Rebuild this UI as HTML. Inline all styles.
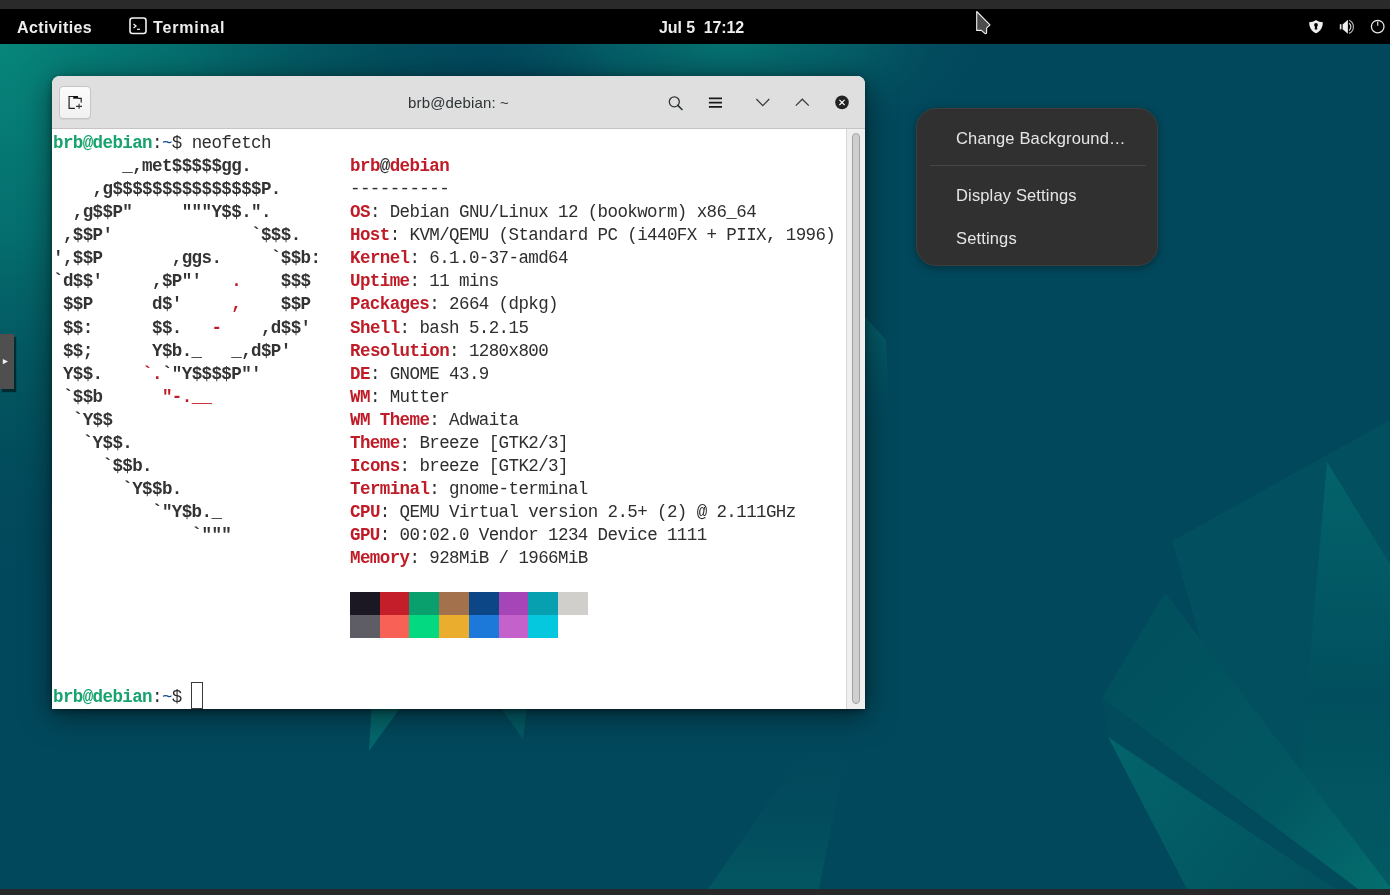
<!DOCTYPE html>
<html><head><meta charset="utf-8">
<style>
*{margin:0;padding:0;box-sizing:border-box}
html,body{width:1390px;height:895px;overflow:hidden;background:#02485c}
body{position:relative;font-family:"Liberation Sans",sans-serif}
.abs{position:absolute}
#bg{position:absolute;left:0;top:0;width:1390px;height:895px}
#stripT{position:absolute;left:0;top:0;width:1390px;height:9px;background:#2a2a2a}
#stripB{position:absolute;left:0;top:889px;width:1390px;height:6px;background:#282828}
#bar{position:absolute;left:0;top:9px;width:1390px;height:35px;background:#000}
.bt{position:absolute;will-change:transform;color:#ededed;font-weight:bold;font-size:16px;line-height:20px;white-space:pre}
#win{position:absolute;left:52px;top:76px;width:813px;height:633px;background:#fff;border-radius:8px 8px 0 0;box-shadow:0 2px 6px rgba(0,0,0,.4),0 6px 30px rgba(0,0,0,.5);overflow:hidden}
#hdr{position:absolute;left:0;top:0;width:813px;height:53px;background:#dfdfe0;border-bottom:1px solid #c4c4c6}
#term{position:absolute;left:0;top:53px;width:794px;height:580px;background:#fff;overflow:hidden}
#sb{position:absolute;left:794px;top:53px;width:19px;height:580px;background:#efeff0;border-left:1px solid #d6d6d6}
#slider{position:absolute;left:5px;top:4px;width:8px;height:571px;background:#cfcfd1;border:1px solid #a3a3a3;border-radius:5px}
pre{position:absolute;left:1px;margin:0;will-change:transform;font-family:"Liberation Mono",monospace;font-size:17.5px;letter-spacing:-0.6px;line-height:23.07px;color:#2e2e2e;white-space:pre}
b{font-weight:bold}
.r{color:#c01c28;font-weight:bold}
.g{color:#18a36e;font-weight:bold}
.bl{color:#12488b}
.a{font-weight:bold;color:#333}
#menu{position:absolute;left:916px;top:108px;width:242px;height:158px;background:#303030;border-radius:20px;border:1px solid #3e3e3e;box-shadow:0 2px 8px rgba(0,0,0,.35)}
.mi{position:absolute;will-change:transform;left:39px;color:#e6e6e6;font-size:16.5px;letter-spacing:0.15px;white-space:pre;line-height:20px}
</style></head><body>
<svg id="bg" width="1390" height="895" viewBox="0 0 1390 895">
<defs>
<radialGradient id="tl" cx="0" cy="44" r="520" gradientUnits="userSpaceOnUse" gradientTransform="translate(0 44) scale(1 1.05) translate(0 -44)">
<stop offset="0" stop-color="#07867b"/>
<stop offset="0.35" stop-color="#057270" stop-opacity="0.9"/>
<stop offset="0.7" stop-color="#03585f" stop-opacity="0.5"/>
<stop offset="1" stop-color="#02485c" stop-opacity="0"/>
</radialGradient>
<radialGradient id="tm" cx="730" cy="40" r="260" gradientUnits="userSpaceOnUse" gradientTransform="translate(730 40) scale(1 0.45) translate(-730 -40)">
<stop offset="0" stop-color="#067370"/>
<stop offset="0.5" stop-color="#05646a" stop-opacity="0.7"/>
<stop offset="1" stop-color="#02485c" stop-opacity="0"/>
</radialGradient>
<linearGradient id="pa" x1="1172" y1="540" x2="1390" y2="889" gradientUnits="userSpaceOnUse">
<stop offset="0" stop-color="#025360"/>
<stop offset="1" stop-color="#035a64"/>
</linearGradient>
<linearGradient id="pb" x1="1327" y1="462" x2="1320" y2="889" gradientUnits="userSpaceOnUse">
<stop offset="0" stop-color="#03636b"/>
<stop offset="0.55" stop-color="#014f5e"/>
<stop offset="1" stop-color="#025a63"/>
</linearGradient>
<linearGradient id="pc" x1="1150" y1="650" x2="1390" y2="889" gradientUnits="userSpaceOnUse">
<stop offset="0" stop-color="#01505e"/>
<stop offset="0.6" stop-color="#025862"/>
<stop offset="1" stop-color="#046e6e"/>
</linearGradient>
<linearGradient id="pd" x1="1108" y1="737" x2="1300" y2="889" gradientUnits="userSpaceOnUse">
<stop offset="0" stop-color="#03646b"/>
<stop offset="1" stop-color="#02535f"/>
</linearGradient>
<linearGradient id="qd" x1="0" y1="738" x2="0" y2="889" gradientUnits="userSpaceOnUse">
<stop offset="0" stop-color="#02485c" stop-opacity="0"/>
<stop offset="1" stop-color="#035862" stop-opacity="0.9"/>
</linearGradient>
<linearGradient id="rw" x1="0" y1="317" x2="0" y2="440" gradientUnits="userSpaceOnUse">
<stop offset="0" stop-color="#04626a" stop-opacity="0.9"/>
<stop offset="1" stop-color="#02485c" stop-opacity="0"/>
</linearGradient>
</defs>
<rect width="1390" height="895" fill="#02485c"/>
<rect width="1390" height="895" fill="url(#tl)"/>
<rect width="1390" height="895" fill="url(#tm)"/>
<!-- big subtle polygon -->
<polygon points="1172,541 1390,420 1390,889 1294,889 1203,649" fill="#014f5f"/>
<!-- spear -->
<polygon points="1327,462 1390,564 1390,889 1290,889" fill="url(#pb)"/>
<!-- S2 shard -->
<polygon points="1165,593 1390,887 1390,889 1358,889 1102,698" fill="url(#pc)"/>
<!-- dark band -->
<polygon points="1102,698 1358,889 1335,889 1108,737" fill="#014b5d"/>
<!-- lower triangle -->
<polygon points="1108,737 1335,889 1187,889" fill="url(#pd)"/>
<!-- subtle quad bottom middle -->
<polygon points="813,738 849,738 819,889 708,889" fill="url(#qd)"/>
<!-- triangles below window -->
<polygon points="372,700 406,700 369,751" fill="#04676c"/>
<polygon points="495,700 528,700 523,739" fill="#035a64"/>
<!-- polygon right of window -->
<polygon points="865,317 886,340 891,440 865,440" fill="url(#rw)"/>
</svg>
<div id="stripT"></div>
<div id="bar"></div>
<div id="stripB"></div>
<div class="bt" style="left:17px;top:18px;letter-spacing:0.4px">Activities</div>
<svg class="abs" style="left:129px;top:17px" width="18" height="18" viewBox="0 0 18 18"><rect x="1" y="1" width="16" height="15.5" rx="2.5" fill="none" stroke="#f2f2f2" stroke-width="1.6"/><path d="M4.5 7 L7 9 L4.5 11" fill="none" stroke="#f2f2f2" stroke-width="1.3"/><path d="M8 12.3 H11" stroke="#f2f2f2" stroke-width="1.2"/></svg>
<div class="bt" style="left:153px;top:18px;letter-spacing:0.85px">Terminal</div>
<div class="bt" style="left:659px;top:18px;letter-spacing:-0.1px">Jul 5  17:12</div>
<svg class="abs" style="left:1306px;top:17px" width="20" height="20" viewBox="0 0 20 20">
 <path d="M10 3 C7.8 4.6 5.6 5.2 3.2 5.3 C3.2 10.5 5.5 14.6 10 16.2 C14.5 14.6 16.8 10.5 16.8 5.3 C14.4 5.2 12.2 4.6 10 3 Z" fill="#f0f0f0"/>
 <circle cx="10" cy="7.9" r="1.9" fill="#000"/>
 <path d="M9.1 8.5 H10.9 L11.3 12.6 H8.7 Z" fill="#000"/>
</svg>
<svg class="abs" style="left:1337px;top:17px" width="20" height="20" viewBox="0 0 20 20">
 <rect x="2.8" y="7.2" width="1.6" height="5.2" fill="#e8e8e8"/>
 <path d="M5.6 7.4 L10.9 2.8 V16.7 L5.6 12.2 Z" fill="#f0f0f0"/>
 <path d="M12.1 6.2 A4.5 4.5 0 0 1 12.1 13.4" fill="none" stroke="#d8d8d8" stroke-width="1.2"/>
 <path d="M12.1 3.2 A7.2 7.2 0 0 1 12.1 16.4" fill="none" stroke="#b0b0b0" stroke-width="1.2"/>
</svg>
<svg class="abs" style="left:1367px;top:16px" width="22" height="22" viewBox="0 0 22 22">
 <circle cx="10.7" cy="10.6" r="6.3" fill="none" stroke="#e6e6e6" stroke-width="1.3"/>
 <path d="M10.7 5.4 V9.8" stroke="#d0d0d0" stroke-width="1.3"/>
</svg>
<svg class="abs" style="left:970px;top:5px" width="30" height="35" viewBox="970 5 30 35">
 <path d="M976.7 11.5 L990 24.8 L986.7 27.9 L986.5 33.2 L985.1 33.7 L981.4 30.4 L976.7 30.4 Z" fill="#4c4c4c" stroke="#f0f0f0" stroke-width="1.1" stroke-linejoin="round"/>
</svg>
<div class="abs" style="left:0;top:334px;width:14px;height:55px;background:#4f4f4f;box-shadow:2px 3px 1px rgba(0,0,0,.5)"></div>
<svg class="abs" style="left:2px;top:358px" width="8" height="8" viewBox="0 0 8 8"><path d="M0.8 1 L6 3.6 L0.8 6.2 Z" fill="#f2f2f2"/></svg>

<div id="win">
 <div id="hdr">
  <div id="nbtn" style="position:absolute;left:7px;top:10px;width:32px;height:33px;border:1px solid #c6c6c6;border-radius:4px;background:linear-gradient(#fbfbfb,#f1f1f1);box-shadow:0 1px 0 rgba(0,0,0,.05)"></div>
  <svg style="position:absolute;left:15px;top:18px" width="17" height="17" viewBox="0 0 17 17">
   <path d="M2.1 2 V15 M1.4 2.5 H11 M2 14.4 H7.9 M11 4.4 H14.2 V8.4" fill="none" stroke="#222" stroke-width="1.2"/>
   <rect x="6.2" y="2.2" width="4.9" height="2.5" fill="#111"/>
   <path d="M9.1 12.4 H15 M12.1 9.7 V14.8" fill="none" stroke="#333" stroke-width="1.1"/>
  </svg>
  <div style="position:absolute;left:356px;top:18px;font-size:15px;line-height:18px;color:#2e3436;white-space:pre;letter-spacing:0.15px;will-change:transform">brb@debian: ~</div>
  <svg style="position:absolute;left:614px;top:18px" width="18" height="18" viewBox="0 0 18 18">
   <circle cx="8.3" cy="7.8" r="5" fill="none" stroke="#2e3436" stroke-width="1.3"/>
   <path d="M11.8 11.3 L16 15.5" stroke="#2e3436" stroke-width="1.7" stroke-linecap="round"/>
  </svg>
  <svg style="position:absolute;left:655px;top:18px" width="16" height="16" viewBox="0 0 16 16">
   <path d="M1.9 4.4 H15 M1.9 8.6 H15 M1.9 12.9 H15" stroke="#1a1a1a" stroke-width="1.9"/>
  </svg>
  <svg style="position:absolute;left:702px;top:20px" width="18" height="13" viewBox="0 0 18 13">
   <path d="M2.3 3 L8.8 9.6 L15.3 3" fill="none" stroke="#3a3a3a" stroke-width="1.25"/>
  </svg>
  <svg style="position:absolute;left:742px;top:20px" width="18" height="13" viewBox="0 0 18 13">
   <path d="M1.8 9.6 L8.3 3.2 L14.8 9.6" fill="none" stroke="#3a3a3a" stroke-width="1.25"/>
  </svg>
  <svg style="position:absolute;left:782px;top:18px" width="16" height="16" viewBox="0 0 16 16">
   <circle cx="8" cy="8.4" r="6.8" fill="#232323"/>
   <path d="M5.4 5.8 L10.6 11 M10.6 5.8 L5.4 11" stroke="#fff" stroke-width="1.1"/>
  </svg>
 </div>
 <div id="term">
<div id="sw"><div style="position:absolute;left:298.0px;top:462.6px;width:30.0px;height:23.1px;background:#1b1823"></div><div style="position:absolute;left:327.7px;top:462.6px;width:30.0px;height:23.1px;background:#c41e2b"></div><div style="position:absolute;left:357.4px;top:462.6px;width:30.0px;height:23.1px;background:#0aa06e"></div><div style="position:absolute;left:387.1px;top:462.6px;width:30.0px;height:23.1px;background:#a3724d"></div><div style="position:absolute;left:416.8px;top:462.6px;width:30.0px;height:23.1px;background:#0c4687"></div><div style="position:absolute;left:446.5px;top:462.6px;width:30.0px;height:23.1px;background:#a545b8"></div><div style="position:absolute;left:476.2px;top:462.6px;width:30.0px;height:23.1px;background:#06a0b1"></div><div style="position:absolute;left:505.9px;top:462.6px;width:30.0px;height:23.1px;background:#d0cfcb"></div><div style="position:absolute;left:298.0px;top:485.6px;width:30.0px;height:23.2px;background:#5e5c64"></div><div style="position:absolute;left:327.7px;top:485.6px;width:30.0px;height:23.2px;background:#f86155"></div><div style="position:absolute;left:357.4px;top:485.6px;width:30.0px;height:23.2px;background:#02d981"></div><div style="position:absolute;left:387.1px;top:485.6px;width:30.0px;height:23.2px;background:#eaad2e"></div><div style="position:absolute;left:416.8px;top:485.6px;width:30.0px;height:23.2px;background:#1c79da"></div><div style="position:absolute;left:446.5px;top:485.6px;width:30.0px;height:23.2px;background:#c461ca"></div><div style="position:absolute;left:476.2px;top:485.6px;width:30.0px;height:23.2px;background:#05c7de"></div><div style="position:absolute;left:505.9px;top:485.6px;width:30.0px;height:23.2px;background:#ffffff"></div></div>
<pre id="tp" style="top:3px"><span class="g">brb@debian</span>:<span class="bl">~</span>$ neofetch
<span class="a">       _,met$$$$$gg.</span>          <span class="r">brb</span><span class="a">@</span><span class="r">debian</span>
<span class="a">    ,g$$$$$$$$$$$$$$$P.</span>       ----------
<span class="a">  ,g$$P"     """Y$$.".</span>        <span class="r">OS</span>: Debian GNU/Linux 12 (bookworm) x86_64
<span class="a"> ,$$P'              `$$$.</span>     <span class="r">Host</span>: KVM/QEMU (Standard PC (i440FX + PIIX, 1996)
<span class="a">',$$P       ,ggs.     `$$b:</span>   <span class="r">Kernel</span>: 6.1.0-37-amd64
<span class="a">`d$$'     ,$P"'   </span><span class="r">.</span><span class="a">    $$$</span>    <span class="r">Uptime</span>: 11 mins
<span class="a"> $$P      d$'     </span><span class="r">,</span><span class="a">    $$P</span>    <span class="r">Packages</span>: 2664 (dpkg)
<span class="a"> $$:      $$.   </span><span class="r">-</span><span class="a">    ,d$$'</span>    <span class="r">Shell</span>: bash 5.2.15
<span class="a"> $$;      Y$b._   _,d$P'</span>      <span class="r">Resolution</span>: 1280x800
<span class="a"> Y$$.    </span><span class="r">`.</span><span class="a">`"Y$$$$P"'</span>         <span class="r">DE</span>: GNOME 43.9
<span class="a"> `$$b      </span><span class="r">"-.__</span>              <span class="r">WM</span>: Mutter
<span class="a">  `Y$$</span>                        <span class="r">WM Theme</span>: Adwaita
<span class="a">   `Y$$.</span>                      <span class="r">Theme</span>: Breeze [GTK2/3]
<span class="a">     `$$b.</span>                    <span class="r">Icons</span>: breeze [GTK2/3]
<span class="a">       `Y$$b.</span>                 <span class="r">Terminal</span>: gnome-terminal
<span class="a">          `"Y$b._</span>             <span class="r">CPU</span>: QEMU Virtual version 2.5+ (2) @ 2.111GHz
<span class="a">              `"""</span>            <span class="r">GPU</span>: 00:02.0 Vendor 1234 Device 1111
                              <span class="r">Memory</span>: 928MiB / 1966MiB





<span class="g">brb@debian</span>:<span class="bl">~</span>$ </pre>
 </div>
 <div id="cur" style="position:absolute;left:139px;top:606px;width:12px;height:27px;border:1px solid #3a3a3a"></div>
 <div id="sb"><div id="slider"></div></div>
</div>

<div id="menu">
 <div class="mi" style="top:19px">Change Background…</div>
 <div style="position:absolute;left:13px;top:56px;width:216px;height:1px;background:#464646"></div>
 <div class="mi" style="top:76px">Display Settings</div>
 <div class="mi" style="top:119px">Settings</div>
</div>
</body></html>
